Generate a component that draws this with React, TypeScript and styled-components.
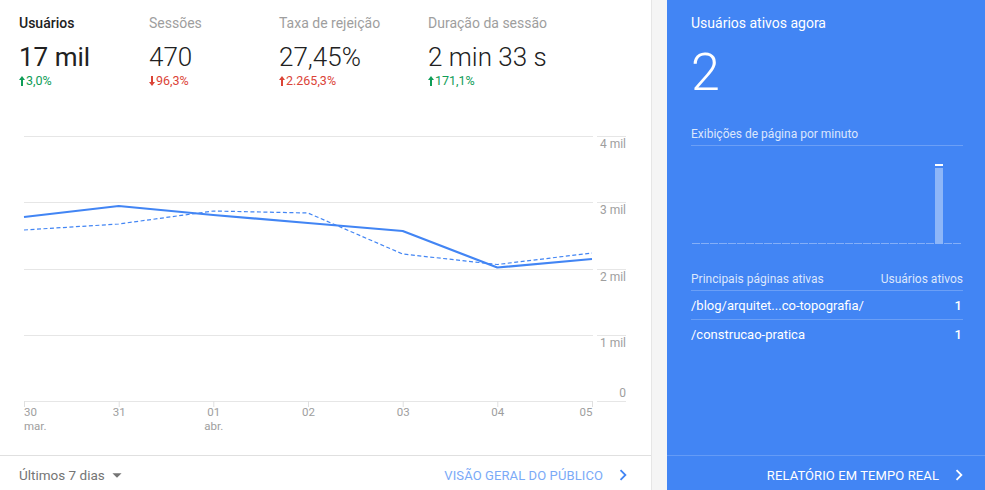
import React from "react";
import styled, { createGlobalStyle } from "styled-components";

const GlobalStyle = createGlobalStyle`
  html, body { margin: 0; padding: 0; background: #f5f5f5; }
  body { font-family: Roboto, "Liberation Sans", Arial, sans-serif; -webkit-font-smoothing: antialiased; }
  * { box-sizing: border-box; }
`;

const Page = styled.div`
  display: flex;
  width: 985px;
  height: 490px;
  background: #f5f5f5;
`;

const Card = styled.div`
  width: 652px;
  height: 100%;
  background: #fff;
  border-right: 1px solid #e6e6e6;
  display: flex;
  flex-direction: column;
`;

const Metrics = styled.div`
  display: grid;
  grid-template-columns: 130px 130px 149px auto;
  padding: 15px 19px 0;
  height: 100px;
`;

const Metric = styled.div`
  display: flex;
  flex-direction: column;
`;

const MetricLabel = styled.div<{ $active?: boolean }>`
  font-size: 14px;
  line-height: 16px;
  height: 16px;
  font-weight: ${(p) => (p.$active ? 500 : 400)};
  color: ${(p) => (p.$active ? "#212121" : "#9e9e9e")};
  white-space: nowrap;
`;

const MetricValue = styled.div<{ $active?: boolean }>`
  margin-top: 11px;
  font-size: 26px;
  line-height: 30px;
  height: 30px;
  font-weight: ${(p) => (p.$active ? 400 : 300)};
  color: #212121;
  white-space: nowrap;
`;

const Change = styled.div<{ $up: boolean; $good: boolean }>`
  margin-top: 2px;
  display: flex;
  align-items: center;
  gap: 1px;
  font-size: 12.5px;
  line-height: 14px;
  color: ${(p) => (p.$good ? "#0f9d58" : "#db4437")};
  svg { transform: ${(p) => (p.$up ? "none" : "rotate(180deg)")}; }
`;

const ChartArea = styled.div`
  flex: 1;
`;

const Footer = styled.div`
  height: 35px;
  border-top: 1px solid #e0e0e0;
  display: flex;
  align-items: center;
  justify-content: space-between;
  padding: 4px 17px 0 19px;
`;

const RangeSelect = styled.div`
  display: flex;
  align-items: center;
  font-size: 13.5px;
  color: #757575;
  svg { margin-left: 1px; }
`;

const FooterLink = styled.div<{ $light?: boolean }>`
  display: flex;
  align-items: center;
  gap: 9px;
  font-size: 13px;
  letter-spacing: 0.1px;
  color: ${(p) => (p.$light ? "#ffffff" : "#7baaf7")};
  text-transform: uppercase;
  svg { fill: ${(p) => (p.$light ? "#ffffff" : "#4285f4")}; }
`;

const Realtime = styled.div`
  margin-left: 15px;
  flex: 1;
  height: 100%;
  background: #4285f4;
  display: flex;
  flex-direction: column;
  color: #fff;
`;

const RtBody = styled.div`
  flex: 1;
  padding: 15px 22px 0 24px;
  display: flex;
  flex-direction: column;
`;

const RtTitle = styled.div`
  font-size: 14px;
  line-height: 16px;
  color: #fff;
`;

const RtNumber = styled.div`
  margin-top: 16px;
  font-size: 52px;
  line-height: 52px;
  font-weight: 300;
  color: #fff;
`;

const RtSubtitle = styled.div`
  margin-top: 27px;
  font-size: 12px;
  line-height: 16px;
  color: rgba(255, 255, 255, 0.82);
  padding-bottom: 3px;
  border-bottom: 1px solid rgba(255, 255, 255, 0.22);
`;

const MiniChart = styled.div`
  height: 100px;
  display: flex;
  align-items: flex-end;
  gap: 1px;
  padding-left: 1px;
  padding-bottom: 2px;
`;

const Bar = styled.div<{ $empty: boolean }>`
  width: 8px;
  position: relative;
  background: ${(p) => (p.$empty ? "rgba(255,255,255,0.35)" : "rgba(255,255,255,0.4)")};
  ${(p) => (p.$empty ? "height: 1px;" : "")}
  &::before {
    content: "";
    display: ${(p) => (p.$empty ? "none" : "block")};
    position: absolute;
    left: 0;
    right: 0;
    top: -4px;
    height: 2px;
    background: #fff;
  }
`;

const Table = styled.div`
  margin-top: 25px;
  display: flex;
  flex-direction: column;
`;

const TableHead = styled.div`
  display: flex;
  justify-content: space-between;
  font-size: 12px;
  line-height: 16px;
  color: rgba(255, 255, 255, 0.82);
  padding-bottom: 3px;
  border-bottom: 1px solid rgba(255, 255, 255, 0.22);
`;

const Row = styled.div<{ $last?: boolean }>`
  display: flex;
  justify-content: space-between;
  padding: 1px 1px 0 0;
  font-size: 13px;
  line-height: 27px;
  color: #fff;
  border-bottom: ${(p) => (p.$last ? "none" : "1px solid rgba(255,255,255,0.22)")};
  span:last-child { font-weight: 500; }
`;

const RtFooter = styled.div`
  height: 35px;
  border-top: 1px solid rgba(255, 255, 255, 0.18);
  display: flex;
  align-items: center;
  justify-content: flex-end;
  padding: 4px 15px 0 0;
`;

const ArrowIcon = () => (
  <svg width="6" height="10" viewBox="0 0 6 10">
    <path d="M3 0 L6 4 H4 V10 H2 V4 H0 Z" fill="currentColor" />
  </svg>
);

const Chevron = () => (
  <svg width="22" height="22" viewBox="0 0 24 24">
    <path d="M10 6L8.59 7.41 13.17 12l-4.58 4.59L10 18l6-6z" />
  </svg>
);

const DropArrow = () => (
  <svg width="22" height="22" viewBox="0 0 24 24">
    <path d="M7 10l5 5 5-5z" fill="#757575" />
  </svg>
);

const metrics = [
  { label: "Usuários", value: "17 mil", change: "3,0%", up: true, good: true, active: true },
  { label: "Sessões", value: "470", change: "96,3%", up: false, good: false },
  { label: "Taxa de rejeição", value: "27,45%", change: "2.265,3%", up: true, good: false },
  { label: "Duração da sessão", value: "2 min 33 s", change: "171,1%", up: true, good: true },
];

// chart coordinates (relative to chart area, which starts at y=100)
const ticks = [24, 118.7, 213.3, 308, 402.7, 497.3, 592];
const gridY = [36.5, 102.5, 169.5, 235.5, 301.5];
const yLabels = ["4 mil", "3 mil", "2 mil", "1 mil", "0"];
const solid = [117, 106, 115, 123, 131, 167.5, 159];
const dashed = [130, 124, 111, 113, 154, 164.5, 153];
const xLabels: [string, string?][] = [
  ["30", "mar."],
  ["31"],
  ["01", "abr."],
  ["02"],
  ["03"],
  ["04"],
  ["05"],
];

const toPoints = (ys: number[]) => ys.map((y, i) => `${ticks[i]},${y}`).join(" ");

const LineChart = () => (
  <svg width="651" height="355" viewBox="0 0 651 355" style={{ display: "block" }}>
    {gridY.map((y, i) => {
      const last = i === gridY.length - 1;
      return (
        <g key={i}>
          <line x1={24} x2={593} y1={y} y2={y} stroke="#e6e6e6" strokeWidth={1} />
          <line x1={597} x2={626} y1={y} y2={y} stroke="#e6e6e6" strokeWidth={1} />
          <text
            x={626}
            y={last ? y - 5 : y + 11.5}
            textAnchor="end"
            fontSize="12"
            fill="#9e9e9e"
            fontFamily="Roboto, sans-serif"
          >
            {yLabels[i]}
          </text>
        </g>
      );
    })}
    {ticks.map((x, i) => (
      <line key={i} x1={x + 0.5} x2={x + 0.5} y1={301} y2={307} stroke="#e0e0e0" strokeWidth={1} />
    ))}
    {xLabels.map(([a, b], i) => {
      const anchor = i === 0 ? "start" : i === xLabels.length - 1 ? "end" : "middle";
      const x = i === 0 ? ticks[i] : ticks[i] + 0.5;
      return (
        <text key={i} x={x} y={316} textAnchor={anchor} fontSize="11.5" fill="#9e9e9e" fontFamily="Roboto, sans-serif">
          <tspan x={x}>{a}</tspan>
          {b && (
            <tspan x={x} dy="13.5">
              {b}
            </tspan>
          )}
        </text>
      );
    })}
    <polyline points={toPoints(dashed)} fill="none" stroke="#4285f4" strokeWidth={1.2} strokeDasharray="4 2.5" />
    <polyline points={toPoints(solid)} fill="none" stroke="#4285f4" strokeWidth={2.2} strokeLinejoin="round" />
  </svg>
);

const bars = Array.from({ length: 30 }, (_, i) => (i === 27 ? 76 : 0));

export default function App() {
  return (
    <>
      <GlobalStyle />
      <Page>
        <Card>
          <Metrics>
            {metrics.map((m) => (
              <Metric key={m.label}>
                <MetricLabel $active={m.active}>{m.label}</MetricLabel>
                <MetricValue $active={m.active}>{m.value}</MetricValue>
                <Change $up={m.up} $good={m.good}>
                  <ArrowIcon />
                  <span>{m.change}</span>
                </Change>
              </Metric>
            ))}
          </Metrics>
          <ChartArea>
            <LineChart />
          </ChartArea>
          <Footer>
            <RangeSelect>
              Últimos 7 dias
              <DropArrow />
            </RangeSelect>
            <FooterLink>
              Visão geral do público
              <Chevron />
            </FooterLink>
          </Footer>
        </Card>
        <Realtime>
          <RtBody>
            <RtTitle>Usuários ativos agora</RtTitle>
            <RtNumber>2</RtNumber>
            <RtSubtitle>Exibições de página por minuto</RtSubtitle>
            <MiniChart>
              {bars.map((h, i) => (
                <Bar key={i} $empty={h === 0} style={h ? { height: `${h}px` } : undefined} />
              ))}
            </MiniChart>
            <Table>
              <TableHead>
                <span>Principais páginas ativas</span>
                <span>Usuários ativos</span>
              </TableHead>
              <Row>
                <span>/blog/arquitet...co-topografia/</span>
                <span>1</span>
              </Row>
              <Row $last>
                <span>/construcao-pratica</span>
                <span>1</span>
              </Row>
            </Table>
          </RtBody>
          <RtFooter>
            <FooterLink $light>
              Relatório em tempo real
              <Chevron />
            </FooterLink>
          </RtFooter>
        </Realtime>
      </Page>
    </>
  );
}
